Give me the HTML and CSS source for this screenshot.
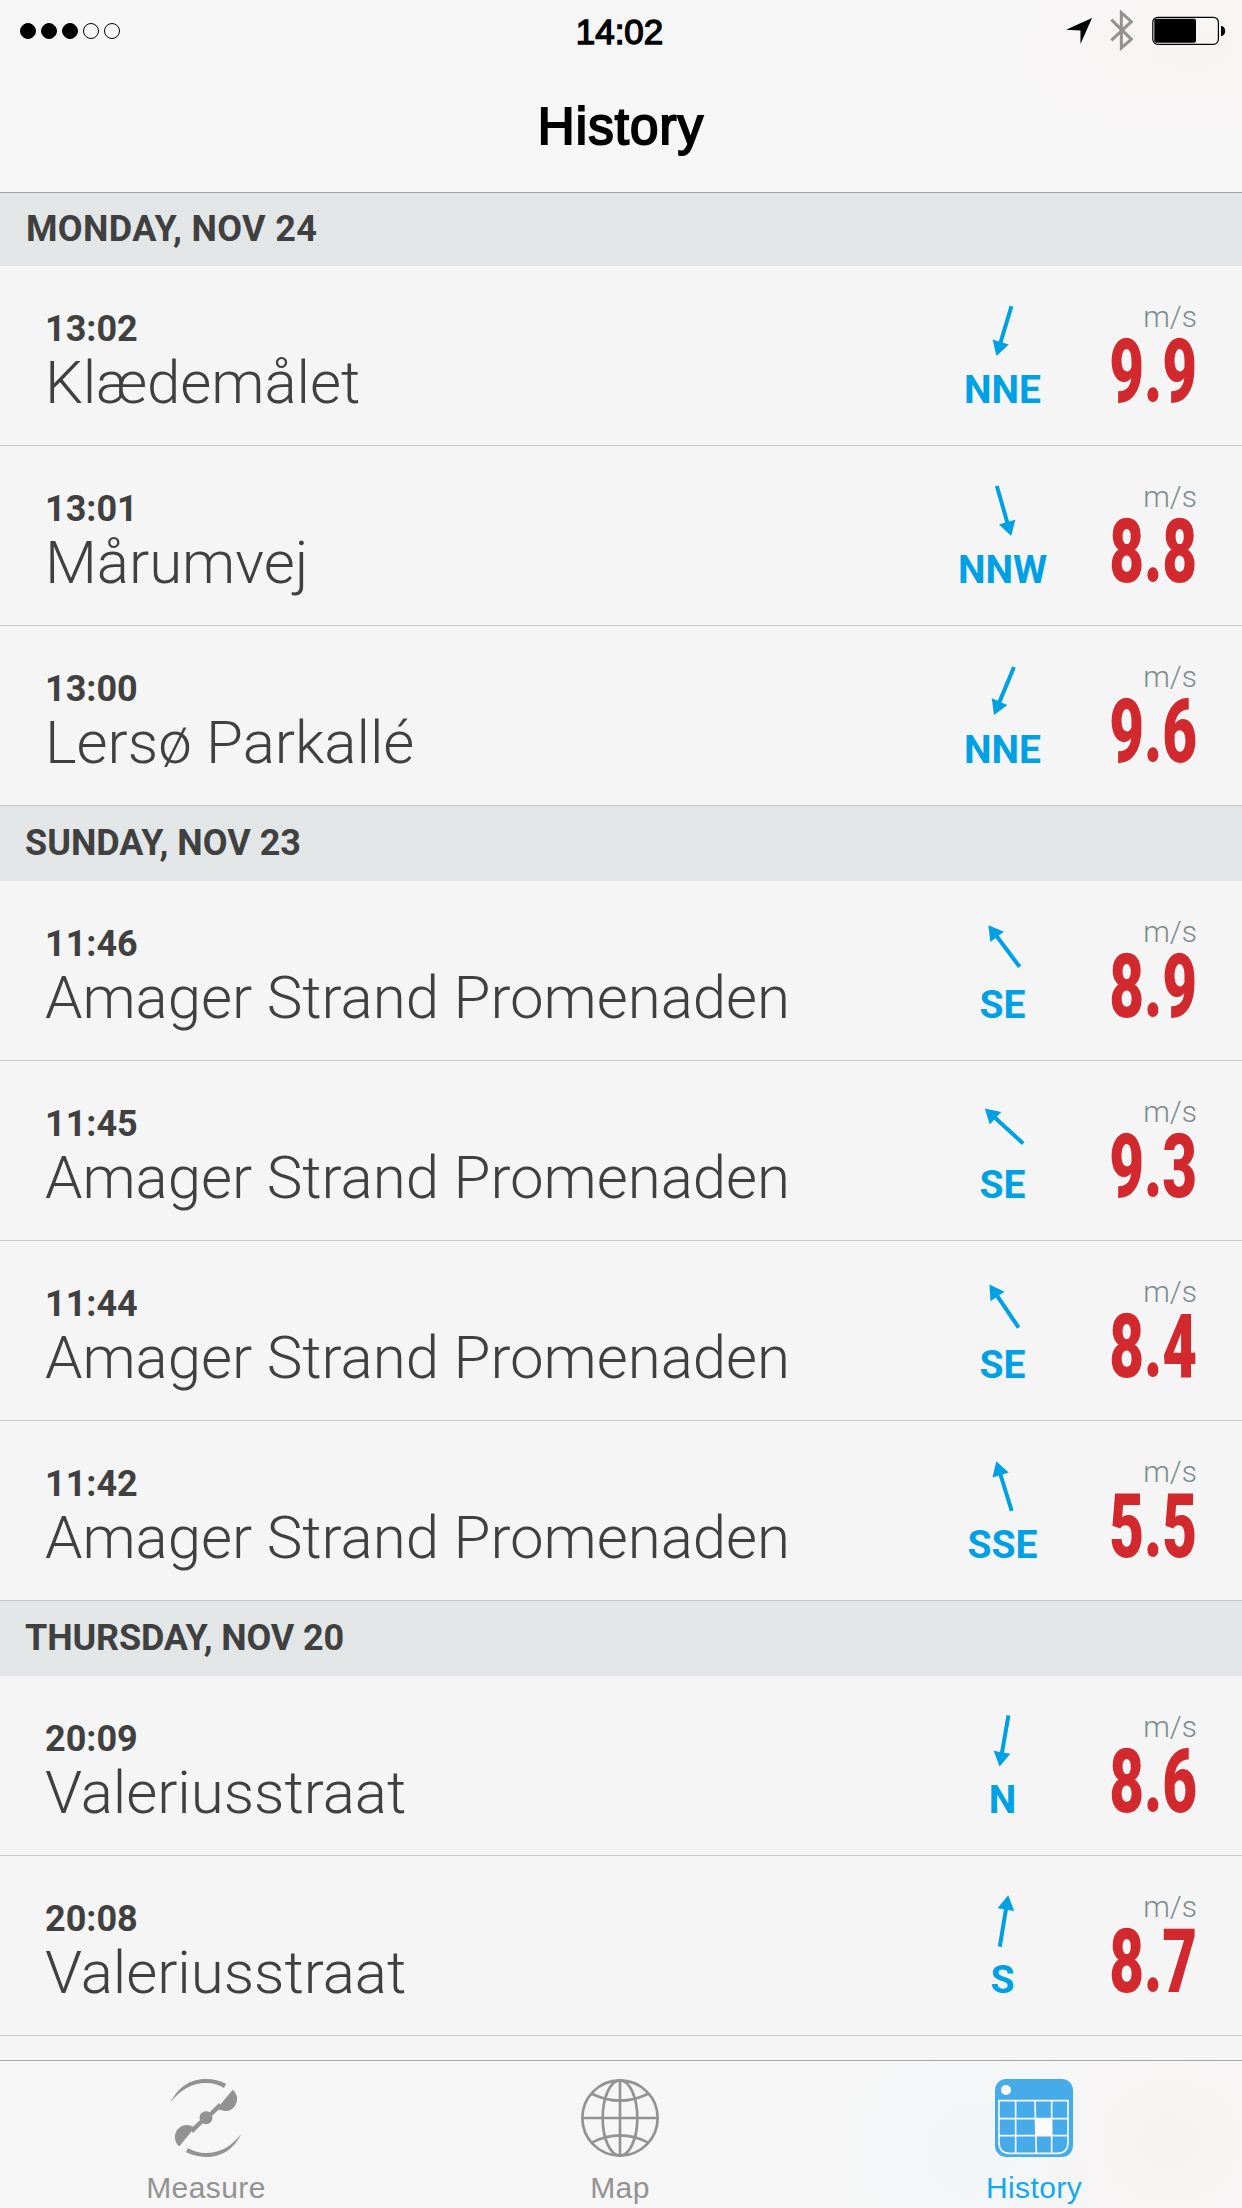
FILE: index.html
```html
<!DOCTYPE html>
<html lang="en">
<head>
  <meta charset="UTF-8" />
  <meta name="viewport" content="width=device-width, initial-scale=1.0"/>
  <title>History</title>
  <link rel="stylesheet" href="styles.css">
</head>
<body>
  <svg class="defs" aria-hidden="true">
    <symbol id="arrow" viewBox="0 0 60 60">
      <path d="M30 4 L38.5 18.5 H32 V56 H28 V18.5 H21.5 Z"/>
    </symbol>
  </svg>

  <header class="navbar">
    <div class="status">
      <div class="signal">
        <i class="dot on"></i><i class="dot on"></i><i class="dot on"></i><i class="dot"></i><i class="dot"></i>
      </div>
      <div class="clock">14:02</div>
      <div class="indicators">
        <svg class="location" viewBox="0 0 79 79"><path d="M0 36 L79 0 L44 79 V38 Z"/></svg>
        <svg class="bluetooth" viewBox="0 0 69 123"><path d="M4 29 L64 88 L34 114 V8 L64 35 L4 91"/></svg>
        <svg class="battery" viewBox="0 0 74 30">
          <rect class="shell" x="0.8" y="1.3" width="65.6" height="27" rx="5"/>
          <rect x="2.3" y="2.8" width="41.7" height="24" rx="2"/>
          <path d="M69 10 C74.5 10 74.5 20 69 20 Z"/>
        </svg>
      </div>
    </div>
    <h1>History</h1>
  </header>

  <main class="list">
    <section>
      <h2>MONDAY, NOV 24</h2>
      <div class="row">
        <div class="place"><time>13:02</time><span>Klædemålet</span></div>
        <div class="wind"><svg viewBox="0 0 60 60"><use href="#arrow" transform="rotate(196.8 30 30)"/></svg><b>NNE</b></div>
        <div class="speed"><small>m/s</small><strong>9.9</strong></div>
      </div>
      <div class="row">
        <div class="place"><time>13:01</time><span>Mårumvej</span></div>
        <div class="wind"><svg viewBox="0 0 60 60"><use href="#arrow" transform="rotate(164 30 30)"/></svg><b>NNW</b></div>
        <div class="speed"><small>m/s</small><strong>8.8</strong></div>
      </div>
      <div class="row">
        <div class="place"><time>13:00</time><span>Lersø Parkallé</span></div>
        <div class="wind"><svg viewBox="0 0 60 60"><use href="#arrow" transform="rotate(202.6 30 30)"/></svg><b>NNE</b></div>
        <div class="speed"><small>m/s</small><strong>9.6</strong></div>
      </div>
    </section>

    <section>
      <h2>SUNDAY, NOV 23</h2>
      <div class="row">
        <div class="place"><time>11:46</time><span>Amager Strand Promenaden</span></div>
        <div class="wind"><svg viewBox="0 0 60 60"><use href="#arrow" transform="rotate(-36.9 30 30)"/></svg><b>SE</b></div>
        <div class="speed"><small>m/s</small><strong>8.9</strong></div>
      </div>
      <div class="row">
        <div class="place"><time>11:45</time><span>Amager Strand Promenaden</span></div>
        <div class="wind"><svg viewBox="0 0 60 60"><use href="#arrow" transform="rotate(-47.6 30 30)"/></svg><b>SE</b></div>
        <div class="speed"><small>m/s</small><strong>9.3</strong></div>
      </div>
      <div class="row">
        <div class="place"><time>11:44</time><span>Amager Strand Promenaden</span></div>
        <div class="wind"><svg viewBox="0 0 60 60"><use href="#arrow" transform="rotate(-34.2 30 30)"/></svg><b>SE</b></div>
        <div class="speed"><small>m/s</small><strong>8.4</strong></div>
      </div>
      <div class="row">
        <div class="place"><time>11:42</time><span>Amager Strand Promenaden</span></div>
        <div class="wind"><svg viewBox="0 0 60 60"><use href="#arrow" transform="rotate(-17.3 30 30)"/></svg><b>SSE</b></div>
        <div class="speed"><small>m/s</small><strong>5.5</strong></div>
      </div>
    </section>

    <section>
      <h2>THURSDAY, NOV 20</h2>
      <div class="row">
        <div class="place"><time>20:09</time><span>Valeriusstraat</span></div>
        <div class="wind"><svg viewBox="0 0 60 60"><use href="#arrow" transform="rotate(189.9 30 30)"/></svg><b>N</b></div>
        <div class="speed"><small>m/s</small><strong>8.6</strong></div>
      </div>
      <div class="row">
        <div class="place"><time>20:08</time><span>Valeriusstraat</span></div>
        <div class="wind"><svg viewBox="0 0 60 60"><use href="#arrow" transform="rotate(9.3 30 30)"/></svg><b>S</b></div>
        <div class="speed"><small>m/s</small><strong>8.7</strong></div>
      </div>
    </section>
  </main>

  <nav class="tabbar">
    <a class="tab">
      <svg viewBox="0 0 234 234">
        <g id="blade">
          <path d="M11 70 C35 20 75 0 117 0 C140 0 160 6 177 14 L171 27 C155 17 137 12 117 12 C75 12 40 32 11 70 Z"/>
          <path d="M197 32 A36 36 0 1 1 151 88 Z"/>
          <path d="M156 72 L164 84 L121 123 L113 115 Z"/>
        </g>
        <use href="#blade" transform="rotate(180 117 117)"/>
        <circle cx="117" cy="116" r="19.5"/>
      </svg>
      <span>Measure</span>
    </a>
    <a class="tab">
      <svg class="line" viewBox="0 0 234 234">
        <circle cx="117" cy="117" r="113"/>
        <ellipse cx="117" cy="117" rx="52" ry="113"/>
        <path d="M117 4 V230 M4 117 H230 M34 45 Q117 85 200 45 M34 190 Q117 148 200 190"/>
      </svg>
      <span>Map</span>
    </a>
    <a class="tab active">
      <svg viewBox="0 0 234 234">
        <rect width="234" height="234" rx="34"/>
        <circle class="hole" cx="33" cy="33" r="15"/>
        <path class="grid" d="M12 65 H219 V190 Q219 223 188 223 H43 Q12 223 12 190 Z M62 65 V223 M120 65 L124 223 M170 65 V223 M12 119 H219 M12 170 H219"/>
        <rect class="hole" x="122" y="119" width="49" height="52"/>
      </svg>
      <span>History</span>
    </a>
  </nav>
</body>
</html>
```
FILE: styles.css
```css
* {
  box-sizing: border-box;
}
body {
  margin: 0;
  width: 1242px;
  height: 2208px;
  overflow: hidden;
  display: flex;
  flex-direction: column;
  background: #f5f5f5;
  color: #404040;
  font-family: Roboto, sans-serif;
}
h1, h2 {
  margin: 0;
}
.defs {
  position: absolute;
  width: 0;
  height: 0;
}

/* status bar + title */
.navbar {
  flex: none;
  height: 193px;
  border-bottom: 1px solid #a0a3a4;
  background: radial-gradient(ellipse 260px 130px at 1190px 50px, #f8f4f4, #f6f6f6);
  color: #000;
  font-family: "Liberation Sans", sans-serif;
  position: relative;
}
.status {
  height: 61px;
  padding: 0 16px 0 20px;
  display: grid;
  grid-template-columns: 1fr auto 1fr;
  align-items: center;
}
.signal {
  display: flex;
  gap: 5px;
}
.dot {
  width: 16px;
  height: 16px;
  border: 1px solid #000;
  border-radius: 50%;
}
.dot.on {
  background: #000;
}
.clock {
  font-size: 35px;
  -webkit-text-stroke: 1.4px #000;
  line-height: 40px;
  padding-top: 3px;
  margin-left: -7px;
}
.indicators {
  display: flex;
  justify-content: flex-end;
  align-items: center;
}
.location {
  width: 26px;
  height: 26px;
  margin-right: 18px;
}
.bluetooth {
  width: 23px;
  height: 41px;
  margin-right: 19px;
  fill: none;
  stroke: #929090;
  stroke-width: 9;
}
.battery {
  width: 74px;
  height: 30px;
}
.shell {
  fill: none;
  stroke: #000;
  stroke-width: 1.2;
}
h1 {
  font-size: 51px;
  font-weight: 400;
  -webkit-text-stroke: 2px #000;
  letter-spacing: 1.1px;
  line-height: 60px;
  padding-top: 36px;
  text-align: center;
}

/* measurements */
.list {
  flex: 1;
  min-height: 0;
  overflow: hidden;
  margin-top: -2px;
}
h2 {
  height: 75px;
  padding-left: 25px;
  background: #e2e6e7;
  font-size: 36px;
  font-weight: 700;
  line-height: 75px;
}
section:first-child h2 {
  padding-left: 26px;
  line-height: 77px;
  letter-spacing: 0.35px;
}
section:last-child h2 {
  letter-spacing: -0.15px;
}
.row {
  height: 180px;
  padding: 0 45px;
  border-bottom: 1px solid #c4c6c8;
  display: flex;
}
.place {
  flex: 1;
  padding-top: 42px;
  display: flex;
  flex-direction: column;
}
.place time {
  font-size: 36px;
  font-weight: 700;
  line-height: 42px;
}
.place span {
  font-size: 60px;
  font-weight: 300;
  line-height: 66px;
  letter-spacing: -0.04px;
}
.wind {
  width: 120px;
  padding-top: 35px;
  display: flex;
  flex-direction: column;
  align-items: center;
  color: #00a1e4;
  fill: #00a1e4;
}
.wind svg {
  width: 60px;
  height: 60px;
}
.wind b {
  font-size: 39px;
  line-height: 46px;
  margin: 6px 3px 0 0;
}
.speed {
  width: 133px;
  padding-top: 31px;
  display: flex;
  flex-direction: column;
  align-items: flex-end;
}
.speed small {
  font-size: 30px;
  font-weight: 300;
  line-height: 40px;
  color: #7f8c8d;
}
.speed strong {
  font-size: 89px;
  font-weight: 900;
  line-height: 80px;
  margin-top: -5px;
  color: #d2292e;
  transform: scaleX(0.675);
  transform-origin: right;
}

/* tabs */
.tabbar {
  flex: none;
  height: 148px;
  border-top: 1px solid #a3a4a3;
  background: radial-gradient(ellipse 160px 140px at 1170px 80px, #f8f3f3, #f6f6f600),
    radial-gradient(ellipse 140px 140px at 970px 90px, #f2f6f8, #f6f6f6);
  display: flex;
  position: relative;
}
.tab {
  flex: 1;
  padding: 18px 2px 0 0;
  display: flex;
  flex-direction: column;
  align-items: center;
  color: #929292;
  fill: #929292;
  font-family: "Liberation Sans", sans-serif;
  font-size: 30px;
}
.tab svg {
  width: 78px;
  height: 78px;
}
.tab span {
  line-height: 34px;
  margin-top: 14px;
  letter-spacing: 0.4px;
}
.line {
  fill: none;
  stroke: #929292;
  stroke-width: 8;
}
.tab.active {
  color: #12aaec;
  fill: #47abea;
}
.hole {
  fill: #fafcfd;
}
.grid {
  fill: none;
  stroke: #f4f9fc;
  stroke-width: 5;
}
```
